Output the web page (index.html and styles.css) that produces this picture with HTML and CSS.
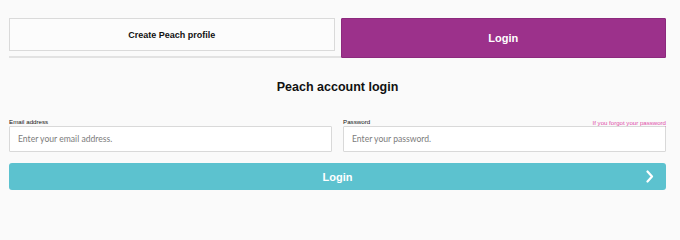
FILE: index.html
```html
<!DOCTYPE html>
<html lang="en">
<head>
<meta charset="utf-8">
<title>Peach account login</title>
<link rel="stylesheet" href="styles.css">
</head>
<body>
<div class="page">
  <div class="tabs">
    <a class="tab tab-create" href="#">Create Peach profile</a>
    <a class="tab tab-login" href="#">Login</a>
  </div>
  <h1 class="title">Peach account login</h1>
  <form class="form">
    <div class="fields">
      <div class="field">
        <div class="label-row">
          <label class="label" for="email">Email address</label>
        </div>
        <input class="input" id="email" type="email" placeholder="Enter your email address.">
      </div>
      <div class="field">
        <div class="label-row">
          <label class="label" for="password">Password</label>
          <a class="forgot" href="#">If you forgot your password</a>
        </div>
        <input class="input" id="password" type="password" placeholder="Enter your password.">
      </div>
    </div>
    <button class="submit" type="button">
      <span class="submit-text">Login</span>
      <svg class="chevron" width="8" height="13" viewBox="0 0 8 13" aria-hidden="true"><path d="M1.5 1.5 L6 6.5 L1.5 11.5" fill="none" stroke="#fff" stroke-width="2.2" stroke-linecap="round" stroke-linejoin="round"/></svg>
    </button>
  </form>
</div>
</body>
</html>
```
FILE: styles.css
```css
html, body {
  margin: 0;
  padding: 0;
  background: #fafafa;
}
body {
  font-family: "Liberation Sans", Arial, sans-serif;
  color: #111;
}
.page {
  padding: 18px 14px 0 9px;
}
.tabs {
  display: flex;
  gap: 6px;
  height: 38px;
  border-bottom: 2px solid #e2e2e2;
}
.tab {
  flex: 1 1 0;
  display: flex;
  align-items: center;
  justify-content: center;
  text-decoration: none;
  font-weight: bold;
  box-sizing: border-box;
}
.tab-create {
  align-self: flex-start;
  height: 33px;
  background: #fcfcfc;
  border: 1px solid #dadada;
  color: #111;
  font-size: 9px;
}
.tab-login {
  height: 40px;
  margin-bottom: -2px;
  background: #9c318b;
  border: 1px solid #8c2a7d;
  border-radius: 1px;
  color: #fff;
  font-size: 11px;
}
.title {
  margin: 22px 0 0;
  font-size: 12.5px;
  line-height: 15px;
  text-align: center;
  font-weight: bold;
}
.form {
  margin-top: 23px;
}
.fields {
  display: flex;
  gap: 11px;
}
.field {
  flex: 1 1 0;
  display: flex;
  flex-direction: column;
}
.label-row {
  display: flex;
  justify-content: space-between;
  align-items: flex-end;
  height: 8px;
  line-height: 8px;
}
.label {
  font-size: 6.2px;
  color: #111;
}
.forgot {
  font-size: 6.1px;
  line-height: 7px;
  color: #e04ca8;
  text-decoration: underline;
}
.input {
  box-sizing: border-box;
  width: 100%;
  height: 26px;
  margin: 0;
  padding: 0 8px;
  border: 1px solid #d9d9d9;
  border-radius: 1px;
  background: #fff;
  font-family: Lato, "Noto Sans", sans-serif;
  font-size: 8.6px;
  color: #333;
  outline: none;
}
.input::placeholder {
  color: #7c7c7c;
}
.submit {
  box-sizing: border-box;
  position: relative;
  display: flex;
  align-items: center;
  justify-content: center;
  width: 100%;
  height: 27px;
  margin-top: 11px;
  padding: 0;
  border: none;
  border-radius: 3px;
  background: #5cc2cf;
  color: #fff;
  font-family: "Liberation Sans", Arial, sans-serif;
  font-weight: bold;
  font-size: 11px;
  cursor: pointer;
}
.chevron {
  position: absolute;
  right: 12px;
  top: 7px;
}
```
